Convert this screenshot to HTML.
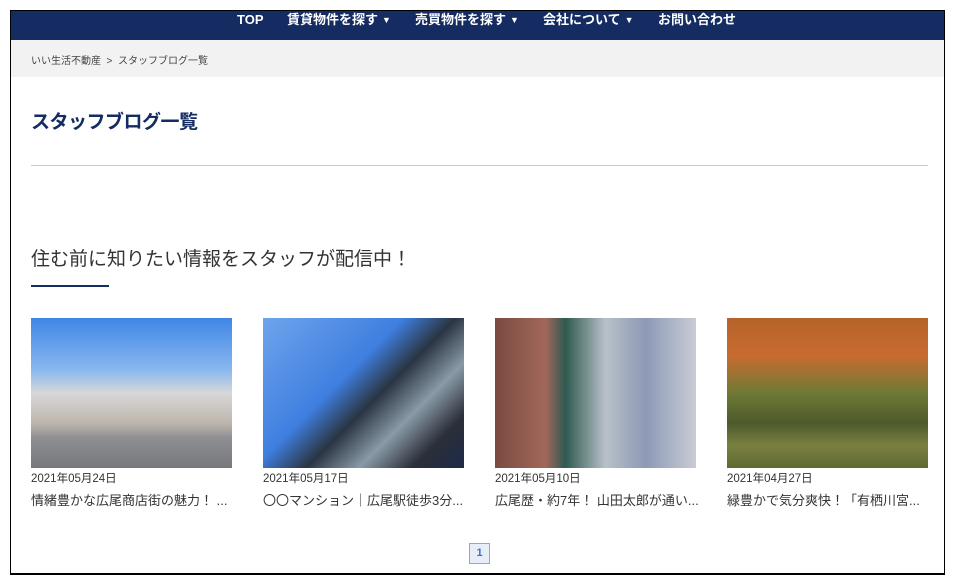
<!DOCTYPE html><html><head><meta charset="utf-8"><style>
*{margin:0;padding:0;box-sizing:border-box}
body{width:955px;height:587px;background:#fff;font-family:"Liberation Sans","Noto Sans CJK JP",sans-serif;position:relative;overflow:hidden}
.frame{position:absolute;left:10px;top:10px;width:935px;height:565px;border:1px solid #000;border-bottom-width:2px}
.nav{position:absolute;left:11px;top:11px;width:933px;height:29px;background:#152c63;color:#fff;font-weight:bold;font-size:13px}
.nav span{position:absolute;top:0;line-height:18px}
.nav i{font-style:normal;font-size:9px;vertical-align:1px;margin-left:4px}
.bc{position:absolute;left:11px;top:40px;width:933px;height:37px;background:#f2f2f2;font-size:10px;color:#444;padding:12px 0 0 20px}
h1{position:absolute;left:31px;top:107px;font-size:19px;color:#152c63;font-weight:bold;letter-spacing:-0.5px}
.hr{position:absolute;left:31px;top:165px;width:897px;height:1px;background:#ccc}
h2{position:absolute;left:31px;top:244px;font-size:19px;font-weight:normal;color:#333}
.ul{position:absolute;left:31px;top:285px;width:78px;height:2px;background:#152c63}
.card{position:absolute;top:318px;width:201px}
.img{height:150px}
.d{font-size:11.5px;color:#333;margin-top:2px}
.t{font-size:13px;color:#333;margin-top:4px;white-space:nowrap}
.pg{position:absolute;left:469px;top:543px;width:21px;height:21px;border:1px solid #8aa8e0;background:#e8eef8;color:#3a6fd0;font-size:11px;font-weight:bold;text-align:center;line-height:19px}
</style></head><body>
<div class="frame"></div>
<div class="nav"><span style="left:226px">TOP</span><span style="left:276px">賃貸物件を探す<i>▼</i></span><span style="left:404px">売買物件を探す<i>▼</i></span><span style="left:532px">会社について<i>▼</i></span><span style="left:647px">お問い合わせ</span></div>
<div class="bc">いい生活不動産 &nbsp;&gt;&nbsp; スタッフブログ一覧</div>
<h1>スタッフブログ一覧</h1>
<div class="hr"></div>
<h2>住む前に知りたい情報をスタッフが配信中！</h2>
<div class="ul"></div>
<div class="card" style="left:31px"><div class="img" style="background:linear-gradient(180deg,#3f86e6 0%,#8ab8ef 35%,#d8d8d8 50%,#bdb6ad 70%,#8e8f93 80%,#77787c 100%)"></div><div class="d">2021年05月24日</div><div class="t">情緒豊かな広尾商店街の魅力！ ...</div></div>
<div class="card" style="left:263px"><div class="img" style="background:linear-gradient(135deg,#6fa4ec 0%,#3f7fe0 40%,#2b3542 55%,#8a9aa8 70%,#2a2f38 85%,#1e2a4a 100%)"></div><div class="d">2021年05月17日</div><div class="t">〇〇マンション｜広尾駅徒歩3分...</div></div>
<div class="card" style="left:495px"><div class="img" style="background:linear-gradient(90deg,#7a4a40 0%,#a2675a 25%,#2f5a50 35%,#b8c0c8 55%,#8d99b6 75%,#c8ccd4 100%)"></div><div class="d">2021年05月10日</div><div class="t">広尾歴・約7年！ 山田太郎が通い...</div></div>
<div class="card" style="left:727px"><div class="img" style="background:linear-gradient(180deg,#b5632a 0%,#c86b30 25%,#6f7a35 50%,#4c5a2c 70%,#7a8040 85%,#5e6a32 100%)"></div><div class="d">2021年04月27日</div><div class="t">緑豊かで気分爽快！「有栖川宮...</div></div>
<div class="pg">1</div>
</body></html>
